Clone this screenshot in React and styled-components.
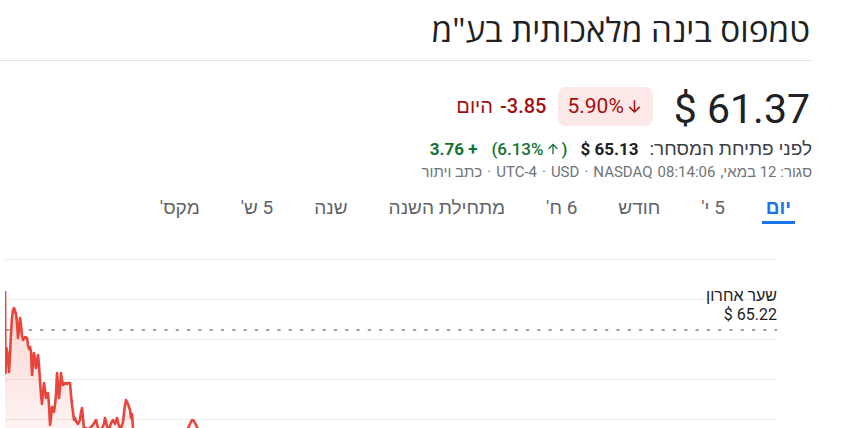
import styled, { createGlobalStyle } from "styled-components";

const GlobalStyle = createGlobalStyle`
  html, body {
    margin: 0;
    padding: 0;
    background: #fff;
    overflow: hidden;
  }
  body {
    font-family: Roboto, "Liberation Sans", Arial, sans-serif;
    color: #202124;
  }
`;

// chart data (pixels inside the chart box)
const points = [
  [5, 291], [5.5, 373], [6.5, 348], [8, 356], [9, 372], [10, 355], [11, 333], [12, 318],
  [13, 310], [14, 308], [15, 311], [16, 314], [17, 323], [18, 338], [19, 330], [20, 318],
  [21, 325], [22, 336], [23, 340], [25, 337], [27, 338], [28, 345], [29, 349], [30, 347],
  [31, 352], [32, 375], [33, 365], [34, 353], [35, 360], [36, 368], [37, 362], [38, 355],
  [39, 365], [40, 381], [41, 395], [42, 404], [43, 392], [44, 383], [45, 390], [46, 398],
  [47, 396], [48, 393], [49, 405], [50, 425], [51, 418], [52, 407], [53, 410], [54, 412],
  [55, 405], [56, 395], [57, 373], [58, 385], [59, 398], [60, 388], [61, 373], [62, 380],
  [63, 385], [65, 383], [67, 384], [68, 383], [70, 383], [71, 395], [72, 405], [73, 412],
  [74, 420], [75, 418], [76, 421], [78, 424], [80, 420], [81, 412], [82, 408], [83, 418],
  [84, 430], [86, 428], [88, 430], [90, 428], [93, 425], [96, 420], [98, 428], [101, 430],
  [104, 424], [105, 418], [107, 426], [109, 430], [111, 423], [113, 420], [115, 424],
  [117, 418], [119, 426], [121, 428], [123, 422], [125, 405], [126, 400], [128, 404],
  [130, 410], [131, 418], [132, 414], [133, 428], [135, 440], [150, 445], [170, 440],
  [186, 432], [190, 424], [192, 420], [194, 421], [197, 427], [200, 435], [220, 445],
  [260, 450],
].map(([x, y]) => [x - 5, y - 240]);

const linePath = points.map(([x, y], i) => `${i ? "L" : "M"}${x} ${y}`).join(" ");
const areaPath = `${linePath} L${points[points.length - 1][0]} 260 L0 260 Z`;

const gridLines = [19, 59, 99, 139, 179];

const tabs = ["יום", "5 י'", "חודש", "6 ח'", "מתחילת השנה", "שנה", "5 ש'", "מקס'"];

function ArrowDown() {
  return (
    <svg width="19" height="19" viewBox="0 0 24 24" fill="none">
      <path d="M12 4v15M5.5 12.5L12 19l6.5-6.5" stroke="currentColor" strokeWidth="1.9" />
    </svg>
  );
}

function ArrowUp() {
  return (
    <svg width="16" height="16" viewBox="0 0 24 24" fill="none">
      <path d="M12 20V5M5.5 11.5L12 5l6.5 6.5" stroke="currentColor" strokeWidth="2" />
    </svg>
  );
}

export default function App() {
  return (
    <>
      <GlobalStyle />
      <Page dir="rtl">
        <Title>טמפוס בינה מלאכותית בע"מ</Title>
        <Divider />
        <PriceRow>
          <Price dir="ltr">$ 61.37</Price>
          <Badge dir="ltr">
            5.90%
            <ArrowDown />
          </Badge>
          <DayChange>
            <Ltr dir="ltr">-3.85</Ltr>
            <span>היום</span>
          </DayChange>
        </PriceRow>
        <PreMarket>
          <PreLabel>לפני פתיחת המסחר:</PreLabel>
          <PrePrice dir="ltr">$ 65.13</PrePrice>
          <PrePct dir="ltr">
            (6.13%
            <ArrowUp /> )
          </PrePct>
          <PreDelta dir="ltr">3.76 +</PreDelta>
        </PreMarket>
        <Meta>
          <span>סגור: 12 במאי,</span>
          <Ltr dir="ltr">08:14:06</Ltr>
          <Ltr dir="ltr">NASDAQ</Ltr>
          <span>·</span>
          <Ltr dir="ltr">USD</Ltr>
          <span>·</span>
          <Ltr dir="ltr">UTC-4</Ltr>
          <span>·</span>
          <span>כתב ויתור</span>
        </Meta>
        <Tabs>
          {tabs.map((t, i) => (
            <Tab key={t} $active={i === 0}>
              {t}
            </Tab>
          ))}
        </Tabs>
        <ChartWrap>
          <svg width="772" height="190" viewBox="0 0 772 190">
            <defs>
              <linearGradient id="fade" x1="0" y1="50" x2="0" y2="190" gradientUnits="userSpaceOnUse">
                <stop offset="0" stopColor="#ea4335" stopOpacity="0.24" />
                <stop offset="1" stopColor="#ea4335" stopOpacity="0.06" />
              </linearGradient>
            </defs>
            {gridLines.map((y) => (
              <line key={y} x1="0" x2="772" y1={y + 0.5} y2={y + 0.5} stroke="#ececec" strokeWidth="1" />
            ))}
            <line
              x1="2"
              x2="772"
              y1="90"
              y2="90"
              stroke="#9aa0a6"
              strokeWidth="2"
              strokeDasharray="1.6 9.7"
              strokeLinecap="round"
            />
            <path d={areaPath} fill="url(#fade)" />
            <path d={linePath} fill="none" stroke="#e8453c" strokeWidth="2.6" strokeLinejoin="round" />
          </svg>
          <LastPrice>
            <span>שער אחרון</span>
            <span dir="ltr">$ 65.22</span>
          </LastPrice>
        </ChartWrap>
      </Page>
    </>
  );
}

const Page = styled.div`
  direction: rtl;
  padding: 0 30px 0 0;
  width: 842px;
  box-sizing: border-box;
`;

const Title = styled.h1`
  margin: 0;
  padding: 10px 2px 0 0;
  height: 49px;
  box-sizing: border-box;
  font-family: "Open Sans", "Liberation Sans", sans-serif;
  font-weight: 400;
  font-size: 33.3px;
  line-height: 38px;
  color: #202124;
  white-space: nowrap;
`;

const Divider = styled.div`
  height: 1px;
  background: #e3e3e3;
  margin-top: 11px;
`;

const PriceRow = styled.div`
  display: flex;
  align-items: center;
  margin-top: 25px;
  height: 40px;
`;

const Price = styled.div`
  font-size: 41px;
  line-height: 40px;
  color: #202124;
  padding: 6px 2px 0 0;
`;

const Badge = styled.div`
  display: flex;
  align-items: center;
  gap: 1px;
  margin-right: 21px;
  height: 39px;
  padding: 0 9px 0 9px;
  border-radius: 8px;
  background: #fce8e6;
  color: #a50e0e;
  font-size: 21px;
  font-weight: 400;
`;

const DayChange = styled.div`
  display: flex;
  gap: 7px;
  margin-right: 12px;
  color: #a50e0e;
  font-size: 20px;
  font-weight: 500;
`;

const Ltr = styled.span`
  direction: ltr;
  unicode-bidi: isolate;
`;

const PreMarket = styled.div`
  display: flex;
  align-items: center;
  gap: 9px;
  margin-top: 12px;
  font-size: 17px;
  line-height: 22px;
`;

const PreLabel = styled.span`
  color: #3c4043;
  font-size: 19px;
`;

const PrePrice = styled.span`
  font-weight: 700;
  color: #202124;
  margin-right: 2px;
`;

const PrePct = styled.span`
  display: flex;
  align-items: center;
  gap: 1px;
  color: #137333;
  font-weight: 500;
  margin-right: 4px;
`;

const PreDelta = styled.span`
  color: #137333;
  font-weight: 700;
  margin-right: 5px;
`;

const Meta = styled.div`
  display: flex;
  gap: 5px;
  margin-top: 3px;
  font-size: 15px;
  line-height: 18px;
  color: #70757a;
  white-space: nowrap;
`;

const Tabs = styled.div`
  display: flex;
  gap: 33px;
  margin-top: 14px;
  padding-right: 17px;
  height: 33px;
`;

const Tab = styled.div`
  padding: 0 4px;
  font-size: 19px;
  line-height: 26px;
  height: 26px;
  white-space: nowrap;
  color: ${(p) => (p.$active ? "#1a73e8" : "#5f6368")};
  font-weight: ${(p) => (p.$active ? 700 : 400)};
  border-bottom: 3px solid ${(p) => (p.$active ? "#1a73e8" : "transparent")};
`;

const ChartWrap = styled.div`
  position: relative;
  margin: 12px 35px 0 5px;
  height: 190px;

  svg {
    display: block;
  }
`;

const LastPrice = styled.div`
  position: absolute;
  top: 46px;
  right: 0;
  display: flex;
  flex-direction: column;
  align-items: flex-start;
  font-size: 16px;
  line-height: 19px;
  color: #202124;
`;
